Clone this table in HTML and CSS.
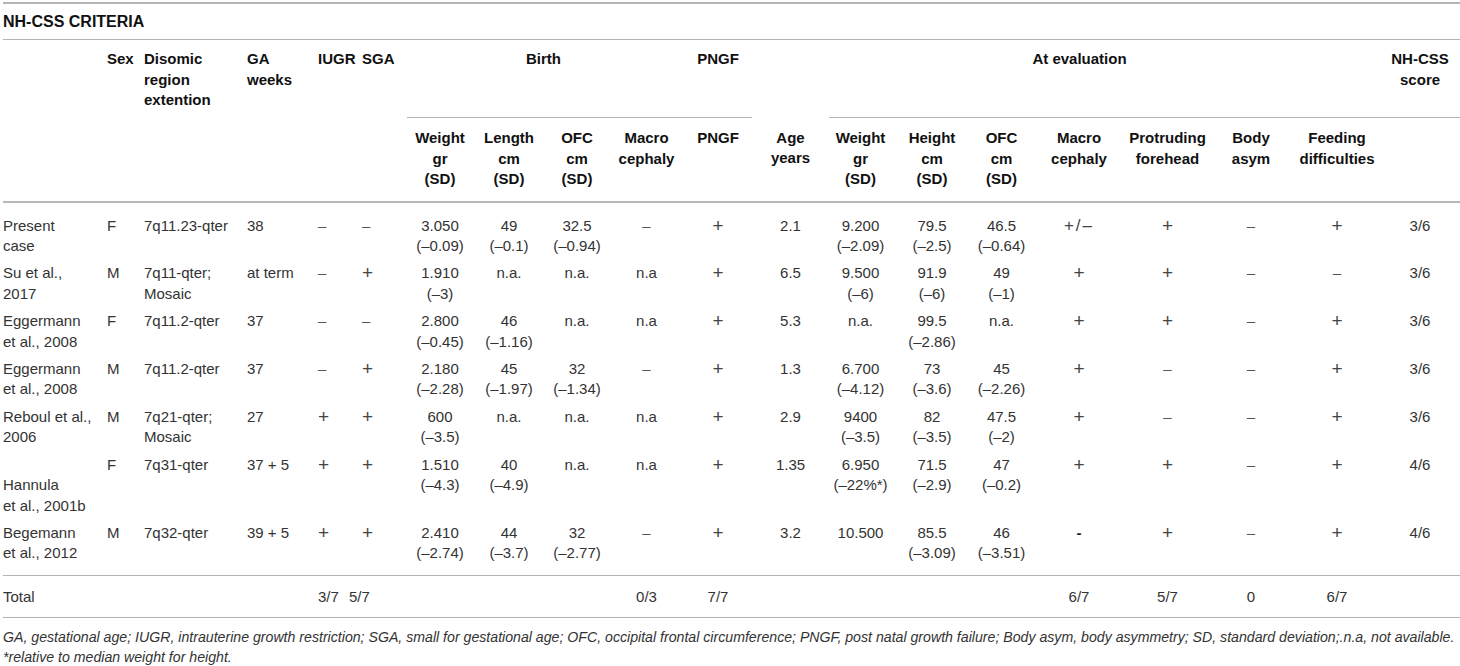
FILE: index.html
```html
<!DOCTYPE html>
<html lang="en">
<head>
<meta charset="utf-8">
<title>NH-CSS criteria</title>
<link rel="stylesheet" href="styles.css">
</head>
<body>
<div class="page">
<table class="crit">
  <colgroup>
    <col class="c-study"><col class="c-sex"><col class="c-reg"><col class="c-ga"><col class="c-iugr"><col class="c-sga">
    <col class="c-bw"><col class="c-bl"><col class="c-bo"><col class="c-bm"><col class="c-pn">
    <col class="c-age"><col class="c-ew"><col class="c-eh"><col class="c-eo"><col class="c-em">
    <col class="c-pf"><col class="c-ba"><col class="c-fd"><col class="c-sc">
  </colgroup>
  <thead>
    <tr class="title"><th colspan="20">NH-CSS CRITERIA</th></tr>
    <tr class="hg">
      <th rowspan="2" class="l"></th>
      <th rowspan="2" class="l sex">Sex</th>
      <th rowspan="2" class="l reg">Disomic<br>region<br>extention</th>
      <th rowspan="2" class="l ga">GA<br>weeks</th>
      <th rowspan="2" class="l iugr">IUGR</th>
      <th rowspan="2" class="l sga">SGA</th>
      <th colspan="4" class="grp birth">Birth</th>
      <th class="grp">PNGF</th>
      <th></th>
      <th colspan="7" class="grp eval">At evaluation</th>
      <th class="grp">NH-CSS<br>score</th>
    </tr>
    <tr class="hs">
      <th>Weight<br>gr<br>(SD)</th>
      <th>Length<br>cm<br>(SD)</th>
      <th>OFC<br>cm<br>(SD)</th>
      <th>Macro<br>cephaly</th>
      <th>PNGF</th>
      <th>Age<br>years</th>
      <th>Weight<br>gr<br>(SD)</th>
      <th>Height<br>cm<br>(SD)</th>
      <th>OFC<br>cm<br>(SD)</th>
      <th>Macro<br>cephaly</th>
      <th>Protruding<br>forehead</th>
      <th>Body<br>asym</th>
      <th>Feeding<br>difficulties</th>
      <th></th>
    </tr>
  </thead>
  <tbody>
    <tr>
      <td class="l">Present<br>case</td><td class="l sex">F</td><td class="l reg">7q11.23-qter</td><td class="l ga">38</td>
      <td class="l iugr"><span class="mi">–</span></td><td class="l sga"><span class="mi">–</span></td>
      <td>3.050<br>(–0.09)</td><td>49<br>(–0.1)</td><td>32.5<br>(–0.94)</td><td><span class="mi">–</span></td><td><span class="pl">+</span></td>
      <td>2.1</td><td>9.200<br>(–2.09)</td><td>79.5<br>(–2.5)</td><td>46.5<br>(–0.64)</td><td><span class="pm">+/–</span></td>
      <td><span class="pl">+</span></td><td><span class="mi">–</span></td><td><span class="pl">+</span></td><td>3/6</td>
    </tr>
    <tr>
      <td class="l">Su et al.,<br>2017</td><td class="l sex">M</td><td class="l reg">7q11-qter;<br>Mosaic</td><td class="l ga">at term</td>
      <td class="l iugr"><span class="mi">–</span></td><td class="l sga"><span class="pl">+</span></td>
      <td>1.910<br>(–3)</td><td>n.a.</td><td>n.a.</td><td>n.a</td><td><span class="pl">+</span></td>
      <td>6.5</td><td>9.500<br>(–6)</td><td>91.9<br>(–6)</td><td>49<br>(–1)</td><td><span class="pl">+</span></td>
      <td><span class="pl">+</span></td><td><span class="mi">–</span></td><td><span class="mi">–</span></td><td>3/6</td>
    </tr>
    <tr>
      <td class="l">Eggermann<br>et al., 2008</td><td class="l sex">F</td><td class="l reg">7q11.2-qter</td><td class="l ga">37</td>
      <td class="l iugr"><span class="mi">–</span></td><td class="l sga"><span class="mi">–</span></td>
      <td>2.800<br>(–0.45)</td><td>46<br>(–1.16)</td><td>n.a.</td><td>n.a</td><td><span class="pl">+</span></td>
      <td>5.3</td><td>n.a.</td><td>99.5<br>(–2.86)</td><td>n.a.</td><td><span class="pl">+</span></td>
      <td><span class="pl">+</span></td><td><span class="mi">–</span></td><td><span class="pl">+</span></td><td>3/6</td>
    </tr>
    <tr>
      <td class="l">Eggermann<br>et al., 2008</td><td class="l sex">M</td><td class="l reg">7q11.2-qter</td><td class="l ga">37</td>
      <td class="l iugr"><span class="mi">–</span></td><td class="l sga"><span class="pl">+</span></td>
      <td>2.180<br>(–2.28)</td><td>45<br>(–1.97)</td><td>32<br>(–1.34)</td><td><span class="mi">–</span></td><td><span class="pl">+</span></td>
      <td>1.3</td><td>6.700<br>(–4.12)</td><td>73<br>(–3.6)</td><td>45<br>(–2.26)</td><td><span class="pl">+</span></td>
      <td><span class="mi">–</span></td><td><span class="mi">–</span></td><td><span class="pl">+</span></td><td>3/6</td>
    </tr>
    <tr>
      <td class="l">Reboul et al.,<br>2006</td><td class="l sex">M</td><td class="l reg">7q21-qter;<br>Mosaic</td><td class="l ga">27</td>
      <td class="l iugr"><span class="pl">+</span></td><td class="l sga"><span class="pl">+</span></td>
      <td>600<br>(–3.5)</td><td>n.a.</td><td>n.a.</td><td>n.a</td><td><span class="pl">+</span></td>
      <td>2.9</td><td>9400<br>(–3.5)</td><td>82<br>(–3.5)</td><td>47.5<br>(–2)</td><td><span class="pl">+</span></td>
      <td><span class="mi">–</span></td><td><span class="mi">–</span></td><td><span class="pl">+</span></td><td>3/6</td>
    </tr>
    <tr>
      <td class="l"><br>Hannula<br>et al., 2001b</td><td class="l sex">F</td><td class="l reg">7q31-qter</td><td class="l ga">37 + 5</td>
      <td class="l iugr"><span class="pl">+</span></td><td class="l sga"><span class="pl">+</span></td>
      <td>1.510<br>(–4.3)</td><td>40<br>(–4.9)</td><td>n.a.</td><td>n.a</td><td><span class="pl">+</span></td>
      <td>1.35</td><td>6.950<br>(–22%*)</td><td>71.5<br>(–2.9)</td><td>47<br>(–0.2)</td><td><span class="pl">+</span></td>
      <td><span class="pl">+</span></td><td><span class="mi">–</span></td><td><span class="pl">+</span></td><td>4/6</td>
    </tr>
    <tr class="last">
      <td class="l">Begemann<br>et al., 2012</td><td class="l sex">M</td><td class="l reg">7q32-qter</td><td class="l ga">39 + 5</td>
      <td class="l iugr"><span class="pl">+</span></td><td class="l sga"><span class="pl">+</span></td>
      <td>2.410<br>(–2.74)</td><td>44<br>(–3.7)</td><td>32<br>(–2.77)</td><td><span class="mi">–</span></td><td><span class="pl">+</span></td>
      <td>3.2</td><td>10.500</td><td>85.5<br>(–3.09)</td><td>46<br>(–3.51)</td><td><span class="mi bold">-</span></td>
      <td><span class="pl">+</span></td><td><span class="mi">–</span></td><td><span class="pl">+</span></td><td>4/6</td>
    </tr>
  </tbody>
  <tfoot>
    <tr>
      <td class="l">Total</td><td></td><td></td><td></td>
      <td class="l iugr">3/7</td><td class="l sga-t">5/7</td>
      <td></td><td></td><td></td><td>0/3</td><td>7/7</td>
      <td></td><td></td><td></td><td></td><td>6/7</td>
      <td>5/7</td><td>0</td><td>6/7</td><td></td>
    </tr>
  </tfoot>
</table>
<p class="note">GA, gestational age; IUGR, intrauterine growth restriction; SGA, small for gestational age; OFC, occipital frontal circumference; PNGF, post natal growth failure; Body asym, body asymmetry; SD, standard deviation;.n.a, not available.<br>*relative to median weight for height.</p>
</div>
</body>
</html>
```

FILE: styles.css
```css
html, body {
  margin: 0;
  padding: 0;
  background: #ffffff;
}

body {
  font-family: "Liberation Sans", Arial, Helvetica, sans-serif;
  font-size: 15px;
  line-height: 20.4px;
  color: #333333;
}

.page {
  padding: 2px 0 0 3px;
}

.crit {
  width: 1457px;
  table-layout: fixed;
  border-collapse: collapse;
  border-top: 2px solid #b4b4b4;
}

.c-study { width: 102px; }
.c-sex { width: 36px; }
.c-reg { width: 103px; }
.c-ga { width: 70px; }
.c-iugr { width: 35px; }
.c-sga { width: 58px; }
.c-bw { width: 66px; }
.c-bl { width: 72px; }
.c-bo { width: 64px; }
.c-bm { width: 75px; }
.c-pn { width: 68px; }
.c-age { width: 77px; }
.c-ew { width: 63px; }
.c-eh { width: 80px; }
.c-eo { width: 59px; }
.c-em { width: 96px; }
.c-pf { width: 81px; }
.c-ba { width: 86px; }
.c-fd { width: 86px; }
.c-sc { width: 80px; }

th, td {
  padding: 0;
  text-align: center;
  vertical-align: top;
  white-space: nowrap;
}

th {
  font-weight: bold;
  color: #111111;
}

.l { text-align: left; }
.sex { padding-left: 2px; }
.reg { padding-left: 3px; }
.ga { padding-left: 3px; }
.iugr { padding-left: 4px; }
.sga { padding-left: 13px; }
.sga-t { padding-left: 0; text-align: left; }

/* title row */
.title th {
  text-align: left;
  font-size: 16px;
  padding: 8px 0 7px;
  border-bottom: 1px solid #b4b4b4;
}

/* header group row */
.hg { height: 78px; }
.hg th { padding-top: 9px; }
.hg .grp { border-bottom: 1px solid #b4b4b4; }
.hg .birth { padding-right: 4px; }
.hg .eval { padding-right: 50px; }

/* header sub row */
.hs th {
  padding: 10px 0 11px;
}
.hs { border-bottom: 2px solid #b8b8b8; }

/* body */
tbody td { padding: 3px 0 4px; }
tbody tr:first-child td { padding-top: 13px; }
tbody tr.last td { padding-bottom: 11px; }

.pl {
  font-size: 19px;
  color: #444444;
}
.mi {
  color: #555555;
}
.mi.bold {
  font-weight: bold;
  color: #222222;
}
.pm {
  font-size: 17px;
  letter-spacing: 2px;
  color: #444444;
}

tfoot tr {
  border-top: 1px solid #b4b4b4;
  border-bottom: 1px solid #b4b4b4;
}
tfoot td { padding: 11px 0 10px; }

.note {
  margin: 10px 0 0;
  font-style: italic;
  font-size: 14.15px;
  line-height: 19.4px;
  color: #333333;
}
```
